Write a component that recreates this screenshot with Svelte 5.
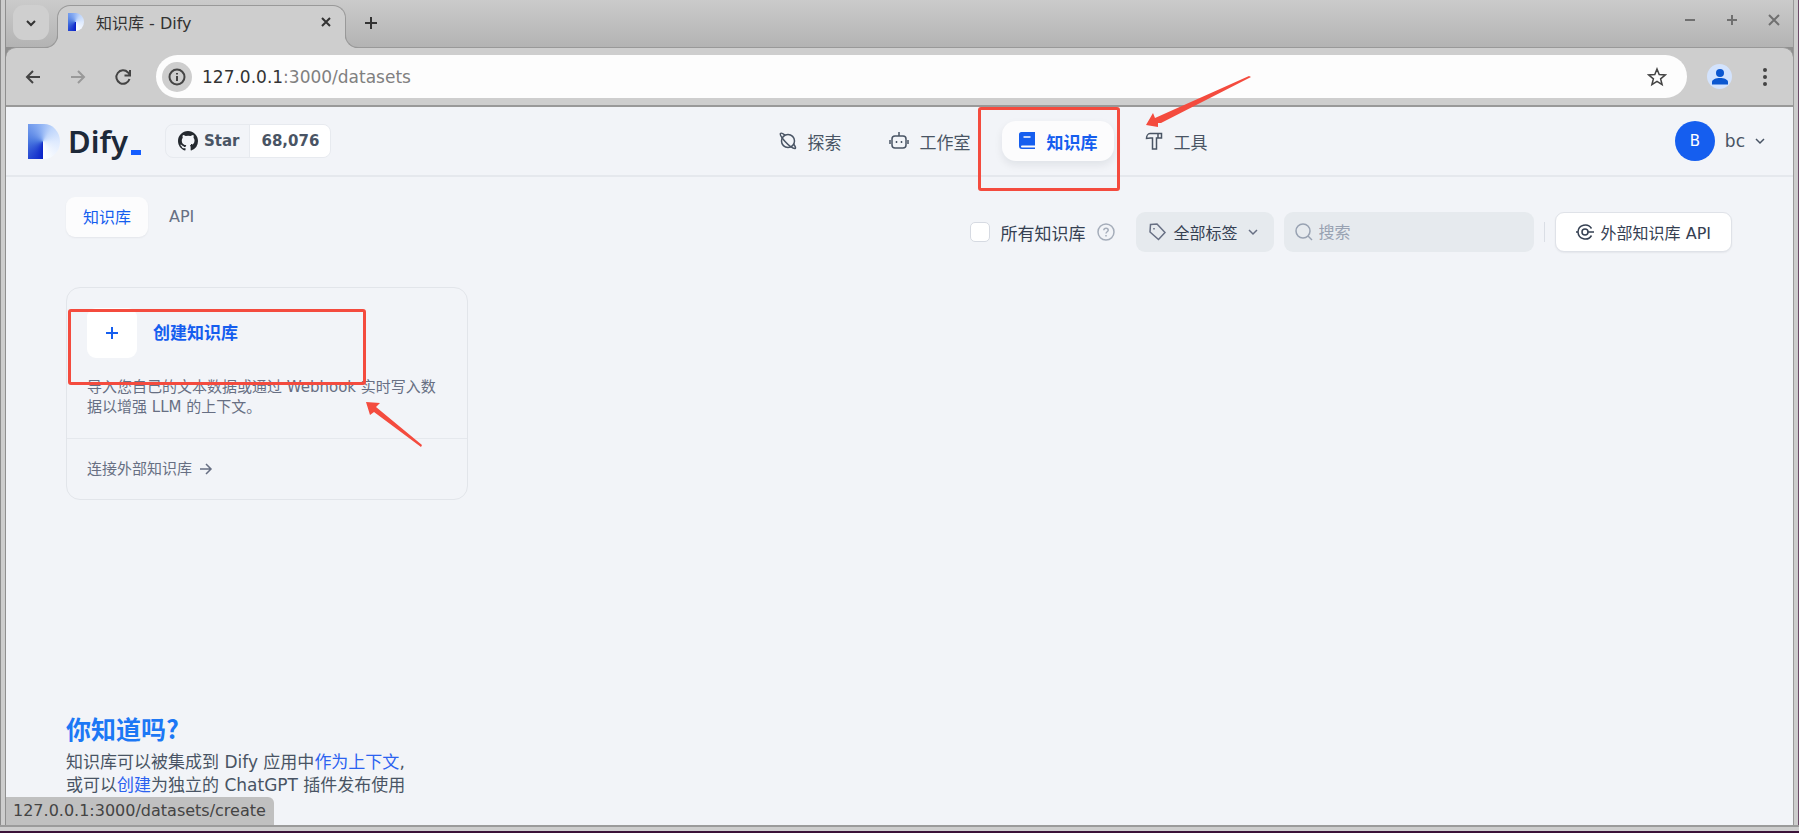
<script>
    let onlyAll = $state(false)
    let keyword = $state('')
    let address = '127.0.0.1:3000/datasets'

    const tabs = [
        { name: '知识库', active: true },
        { name: 'API', active: false },
    ]
</script>

<div class="window">
    <div class="tabstrip">
        <button class="tab-search" aria-label="Search tabs">
            <svg width="12" height="12" viewBox="0 0 12 12"><path d="M2 4l4 4 4-4" /></svg>
        </button>
        <div class="browser-tab">
            <span class="mark"></span>
            <span class="tab-title">知识库 - Dify</span>
            <button aria-label="Close tab">
                <svg width="12" height="12" viewBox="0 0 12 12"><path d="M2 2l8 8M10 2l-8 8" /></svg>
            </button>
        </div>
        <button class="new-tab" aria-label="New tab">
            <svg width="14" height="14" viewBox="0 0 14 14"><path d="M7 1v12M1 7h12" /></svg>
        </button>
        <div class="window-buttons">
            <button aria-label="Minimize">
                <svg width="12" height="12" viewBox="0 0 12 12"><path d="M1 6h10" /></svg>
            </button>
            <button aria-label="Maximize">
                <svg width="12" height="12" viewBox="0 0 12 12"><path d="M1 6h10M6 1v10" /></svg>
            </button>
            <button aria-label="Close window">
                <svg width="12" height="12" viewBox="0 0 12 12"><path d="M1 1l10 10M11 1L1 11" /></svg>
            </button>
        </div>
    </div>

    <div class="toolbar">
        <button aria-label="Back">
            <svg width="18" height="18" viewBox="0 0 18 18"><path d="M16 9H3M9 3L3 9l6 6" /></svg>
        </button>
        <button class="disabled" aria-label="Forward">
            <svg width="18" height="18" viewBox="0 0 18 18"><path d="M2 9h13M9 3l6 6-6 6" /></svg>
        </button>
        <button aria-label="Reload">
            <svg width="18" height="18" viewBox="0 0 18 18"><path d="M15.500 11A6.700 6.700 0 1 1 14 4.500l2 2.500M16 2v5.500h-5.500" /></svg>
        </button>
        <div class="address">
            <button class="info" aria-label="Site information">
                <svg width="18" height="18" viewBox="0 0 18 18">
                    <circle cx="9" cy="9" r="7.500" /><path d="M9 8v5M9 5v1.500" />
                </svg>
            </button>
            <a class="url" href="#top">{address.split(':')[0]}<span>:{address.split(':')[1]}</span></a>
            <button aria-label="Bookmark">
                <svg class="thin" width="20" height="20" viewBox="0 0 20 20">
                    <path d="M10 2l2.200 5.600 6 .4-4.600 3.800 1.500 5.900L10 14.400l-5.100 3.300 1.500-5.900L1.800 8l6-.4z" />
                </svg>
            </button>
        </div>
        <button class="profile" aria-label="Profile">
            <svg width="16" height="16" viewBox="0 0 16 16">
                <circle cx="8" cy="4" r="4" /><path d="M0 15.500V13c0-2.500 4-4 8-4s8 1.500 8 4v2.500z" />
            </svg>
        </button>
        <button class="more" aria-label="Menu">
            <svg width="18" height="20" viewBox="0 0 18 20">
                <circle cx="9" cy="3" r="2" /><circle cx="9" cy="10" r="2" /><circle cx="9" cy="17" r="2" />
            </svg>
        </button>
    </div>

    <div class="page">
        <header>
            <div class="brand">
                <a class="logo" href="#top">
                    <span class="mark"></span>
                    <span class="word">Dify</span><i></i>
                </a>
                <a class="github" href="#star">
                    <span class="star">
                        <svg width="20" height="20" viewBox="0 0 16 16">
                            <path d="M8 0C3.580 0 0 3.580 0 8c0 3.540 2.290 6.530 5.470 7.590.4.070.55-.17.55-.38v-1.500c-2 .4-2.700-.5-2.900-1-.1-.2-.5-1-.9-1.200-.3-.2-.8-.6 0-.6.700 0 1.200.6 1.400.9.800 1.300 2 .9 2.500.7.1-.5.300-.9.600-1.100-1.900-.2-3.700-.9-3.700-4 0-.9.300-1.600.8-2.100-.1-.2-.4-1 .1-2.100 0 0 .7-.2 2.200.8a7.600 7.600 0 0 1 4 0c1.500-1 2.200-.8 2.200-.8.400 1.100.200 1.900.1 2.100.5.500.8 1.200.8 2.100 0 3.100-1.900 3.800-3.700 4 .3.300.600.8.600 1.500v2.200c0 .2.100.5.500.4A8 8 0 0 0 16 8c0-4.420-3.580-8-8-8z" />
                        </svg>
                        Star
                    </span>
                    <span class="count">68,076</span>
                </a>
            </div>

            <nav>
                <a href="#explore">
                    <svg width="18" height="18" viewBox="0 0 18 18">
                        <circle cx="9" cy="9" r="6.500" />
                        <path d="M6 3.200C3.500 1.200 2 .9 1.500 1.500 0 3.500 11 16.800 16 16.500c1-.3.4-2-1.500-4.500" />
                    </svg>
                    探索
                </a>
                <a href="#studio">
                    <svg width="20" height="18" viewBox="0 0 20 18">
                        <rect x="3" y="4" width="14" height="12" rx="3" />
                        <path d="M10 4V0M1 8v4M19 8v4M7.500 9v2M12.500 9v2" />
                    </svg>
                    工作室
                </a>
                <a class="active" href="#datasets">
                    <svg width="18" height="18" viewBox="0 0 18 18">
                        <path class="solid" d="M3.500 0H17v13.500H4a1 1 0 0 0 0 2h13V17H4a3 3 0 0 1-3-3V2.500A2.500 2.500 0 0 1 3.500 0z" />
                        <path class="slot" d="M5.500 5h7" />
                    </svg>
                    知识库
                    <span class="frame"></span>
                    <svg class="arrow" width="108" height="52" viewBox="0 0 108 52">
                        <path d="M2 49L9 37l2 5L105 0l2 1L17 47l-3 0 0 4z" />
                    </svg>
                </a>
                <a href="#tools">
                    <svg width="18" height="18" viewBox="0 0 18 18">
                        <path d="M5 1.500h11.500V6h-5v11h-4V6H5.500l-4 .5C1.500 4 3 1.500 5 1.500zM13 1.500V6" />
                    </svg>
                    工具
                </a>
            </nav>

            <button class="account">
                <span class="avatar">B</span>
                bc
                <svg width="10" height="10" viewBox="0 0 10 10"><path d="M1 3l4 4 4-4" /></svg>
            </button>
        </header>

        <main>
            <div class="controls">
                <div class="tabs">
                    {#each tabs as tab}
                        <button class:selected={tab.active}>{tab.name}</button>
                    {/each}
                </div>
                <div class="filters">
                    <label class="all">
                        <input type="checkbox" bind:checked={onlyAll}>
                        所有知识库
                        <svg width="18" height="18" viewBox="0 0 18 18">
                            <circle cx="9" cy="9" r="8" />
                            <path d="M6.800 7.200C7 4.500 11.200 4.600 11.200 7.200c0 1.500-2.200 1.600-2.200 3.300M9 12v1.400" />
                        </svg>
                    </label>
                    <button class="tags">
                        <svg width="18" height="18" viewBox="0 0 18 18">
                            <path d="M2.500 1.500L9 1l8 8.500-6.500 7L2 9zM6 5v1.500" />
                        </svg>
                        全部标签
                        <svg class="chevron" width="10" height="10" viewBox="0 0 10 10"><path d="M1 3l4 4 4-4" /></svg>
                    </button>
                    <label class="search">
                        <svg width="18" height="18" viewBox="0 0 18 18"><circle cx="8" cy="8" r="7" /><path d="M13 13l4 4" /></svg>
                        <input type="text" placeholder="搜索" aria-label="搜索" bind:value={keyword}>
                    </label>
                    <span class="divider"></span>
                    <button class="external">
                        <svg width="18" height="18" viewBox="0 0 18 18">
                            <circle cx="9" cy="9" r="3" />
                            <path d="M12 9h6M0 9h2.500M15.500 5.500A7.300 7.300 0 0 0 2 9a7.300 7.300 0 0 0 13.500 3.500" />
                        </svg>
                        外部知识库 API
                    </button>
                </div>
            </div>

            <div class="grid">
                <section class="card">
                    <a class="create" href="#create">
                        <span class="head">
                            <span class="plus">
                                <svg width="14" height="14" viewBox="0 0 14 14"><path d="M7 1v12M1 7h12" /></svg>
                            </span>
                            <strong>创建知识库</strong>
                        </span>
                        <span class="desc">导入您自己的文本数据或通过 Webhook 实时写入数据以增强 LLM 的上下文。</span>
                    </a>
                    <a class="connect" href="#connect">
                        连接外部知识库
                        <svg class="thin" width="14" height="14" viewBox="0 0 14 14"><path d="M1 7h11M7 2l5 5-5 5" /></svg>
                    </a>
                    <span class="frame"></span>
                    <svg class="arrow" width="60" height="48" viewBox="0 0 60 48">
                        <path d="M2 2l14 1-4 4 46 38-1 2L10 12l-4 3z" />
                    </svg>
                </section>
            </div>

            <footer>
                <h3>你知道吗?</h3>
                <p>
                    知识库可以被集成到 Dify 应用中<a href="#context">作为上下文</a>,<br>
                    或可以<a href="#plugin">创建</a>为独立的 ChatGPT 插件发布使用
                </p>
            </footer>
        </main>
    </div>
    <div class="status">127.0.0.1:3000/datasets/create</div>
</div>

<style>
    :global(body) {
        margin: 0;
    }

    .window {
        position: relative;
        display: flex;
        flex-direction: column;
        box-sizing: border-box;
        min-height: 100vh;
        padding: 0 6px 8px;
        background: linear-gradient(to right, #8c8c8c 1px, #cdcdcd 1px, #cdcdcd 5px, #8f8f8f 5px, #8f8f8f calc(100% - 6px), #999 calc(100% - 6px), #999 calc(100% - 5px), #cdcdcd calc(100% - 5px), #cdcdcd calc(100% - 1px), #6c4a68 calc(100% - 1px));
        font-family: "DejaVu Sans", "Noto Sans CJK SC", sans-serif;
        font-size: 17px;
        color: #495464;
    }

    .window::after {
        content: "";
        position: absolute;
        left: 0;
        right: 0;
        bottom: 0;
        height: 4px;
        border-top: 2px solid #9b9b9b;
        border-bottom: 2px solid #3a1238;
        background: #cdcdcd;
    }

    button {
        display: flex;
        align-items: center;
        justify-content: center;
        margin: 0;
        padding: 0;
        border: none;
        background: none;
        font: inherit;
        color: inherit;
    }

    a {
        color: inherit;
        text-decoration: none;
    }

    svg {
        flex: none;
        fill: none;
        stroke: currentColor;
        stroke-width: 2;
    }

    .thin {
        stroke-width: 1.5;
    }

    .mark {
        flex: none;
        width: 32px;
        height: 35px;
        border-radius: 0 50% 50% 0;
        background: conic-gradient(from 180deg at 47% 50%, #0a22c8, #4a78e0 25%, #86abf2 45%, #c0d6fb 60%, #deeafe 75%, #fff);
    }

    /* browser chrome */
    .tabstrip {
        display: flex;
        align-items: flex-end;
        height: 47px;
        background: linear-gradient(#cbcbcb, #b3b3b3);
        color: #333;
    }

    .tab-search {
        width: 36px;
        height: 35px;
        margin: 0 8px 7px 7px;
        border-radius: 11px;
        background: #cfcfcf;
    }

    .browser-tab {
        position: relative;
        z-index: 1;
        display: flex;
        align-items: center;
        gap: 12px;
        box-sizing: border-box;
        width: 289px;
        height: 43px;
        margin-bottom: -1px;
        padding: 0 13px 10px 10px;
        border: 1px solid #999;
        border-bottom: none;
        border-radius: 13px 13px 0 0;
        background: #cecece;
        font-size: 16px;
    }

    .browser-tab::before,
    .browser-tab::after {
        content: "";
        position: absolute;
        bottom: 0;
        width: 13px;
        height: 13px;
        border-bottom: 1px solid #999;
    }

    .browser-tab::before {
        right: 100%;
        border-right: 1px solid #999;
        border-bottom-right-radius: 13px;
        box-shadow: 4px 4px 0 #cecece;
        clip-path: inset(0 -1px 0 0);
    }

    .browser-tab::after {
        left: 100%;
        border-left: 1px solid #999;
        border-bottom-left-radius: 13px;
        box-shadow: -4px 4px 0 #cecece;
        clip-path: inset(0 0 0 -1px);
    }

    .browser-tab .mark {
        width: 16px;
        height: 18px;
    }

    .tab-title {
        flex: 1;
    }

    .new-tab {
        width: 36px;
        height: 35px;
        margin: 0 0 7px 7px;
    }

    .window-buttons {
        display: flex;
        gap: 30px;
        margin: 0 13px 21px auto;
        color: #707070;
    }

    .toolbar {
        display: flex;
        align-items: center;
        box-sizing: border-box;
        height: 60px;
        padding: 0 13px 0 18px;
        border: solid #999;
        border-width: 1px 0 2px;
        border-radius: 10px 10px 0 0;
        background: #cecece;
        color: #444;
    }

    .toolbar > button {
        width: 18px;
        margin-right: 27px;
    }

    .toolbar > .disabled {
        color: #999;
    }

    .toolbar > button:nth-child(3) {
        margin-right: 24px;
    }

    .address {
        display: flex;
        flex: 1;
        align-items: center;
        gap: 10px;
        height: 43px;
        padding: 0 20px 0 6px;
        border-radius: 22px;
        background: #fdfdfd;
    }

    .info {
        width: 30px;
        height: 30px;
        border-radius: 50%;
        background: #cecece;
    }

    .url {
        flex: 1;
        color: #333;
    }

    .url span {
        color: #808080;
    }

    .toolbar > .profile {
        width: 25px;
        height: 25px;
        margin: 0 24px 0 20px;
        border-radius: 50%;
        background: #d3e3fd;
        color: #0b57d0;
    }

    .profile svg,
    .more svg {
        fill: currentColor;
        stroke: none;
    }

    .toolbar > .more {
        margin-right: 6px;
    }

    /* Dify page */
    .page {
        display: flex;
        flex: 1;
        flex-direction: column;
        background: #f2f4f8;
    }

    header {
        display: flex;
        align-items: center;
        justify-content: space-between;
        height: 68px;
        padding: 0 8px 0 22px;
        border-bottom: 2px solid #e5e8ed;
    }

    .brand,
    .logo {
        display: flex;
        align-items: center;
    }

    .brand {
        gap: 24px;
    }

    .logo .mark {
        margin-right: 8px;
    }

    .word {
        font: 600 31px/36px "Noto Sans", sans-serif;
        color: #1d2939;
    }

    .logo i {
        align-self: flex-end;
        width: 10px;
        height: 5px;
        margin: 0 0 4px 3px;
        background: #155eff;
    }

    .github {
        display: flex;
        border: 1px solid #e7eaef;
        border-radius: 8px;
        overflow: hidden;
        font-size: 15px;
        font-weight: bold;
        line-height: 32px;
    }

    .github svg {
        fill: #24292f;
        stroke: none;
    }

    .star {
        display: flex;
        align-items: center;
        gap: 6px;
        padding: 0 10px 0 12px;
    }

    .count {
        padding: 0 11px;
        border-left: 1px solid #e7eaef;
        background: #fff;
    }

    nav {
        display: flex;
        gap: 15px;
    }

    nav a {
        position: relative;
        display: flex;
        align-items: center;
        gap: 11px;
        height: 40px;
        padding: 0 16px;
        border-radius: 14px;
    }

    nav svg {
        stroke-width: 1.5;
    }

    nav .active {
        background: #fcfcfd;
        box-shadow: 0 4px 8px rgba(16, 24, 40, 0.08);
        font-weight: bold;
        color: #155eef;
    }

    .solid {
        fill: currentColor;
        stroke: none;
    }

    .slot {
        stroke: #fff;
    }

    /* red callouts */
    .frame {
        position: absolute;
        z-index: 2;
        box-sizing: border-box;
        border: 3px solid #f44b3e;
        border-radius: 3px;
    }

    .arrow {
        position: absolute;
        z-index: 2;
        fill: #f44b3e;
        stroke: none;
    }

    nav .frame {
        left: -24px;
        top: -14px;
        width: 142px;
        height: 84px;
    }

    nav .arrow {
        left: 142px;
        top: -45px;
    }

    .card .frame {
        left: 1px;
        top: 21px;
        width: 298px;
        height: 76px;
    }

    .card .arrow {
        left: 297px;
        top: 112px;
    }

    .account {
        gap: 10px;
        padding: 0 20px;
    }

    .account svg,
    .chevron {
        stroke-width: 1.5;
    }

    .avatar {
        width: 40px;
        border-radius: 50%;
        background: #155eef;
        font-size: 15px;
        line-height: 40px;
        color: #fff;
    }

    main {
        display: flex;
        flex: 1;
        flex-direction: column;
        padding: 20px 61px 28px 60px;
    }

    .controls {
        display: flex;
        justify-content: space-between;
        font-size: 16px;
    }

    .tabs {
        display: flex;
        gap: 4px;
        padding-bottom: 15px;
    }

    .tabs button {
        height: 40px;
        padding: 0 17px 2px;
        border-radius: 9px;
        color: #676f83;
    }

    .tabs .selected {
        background: #fcfcfd;
        box-shadow: 0 1px 2px rgba(16, 24, 40, 0.06);
        color: #155eef;
    }

    .filters {
        display: flex;
        align-items: center;
        padding-top: 15px;
    }

    .all {
        display: flex;
        align-items: center;
        gap: 11px;
        margin-right: 21px;
        font-size: 17px;
        color: #354052;
    }

    .all input {
        appearance: none;
        width: 20px;
        height: 20px;
        margin: 0;
        border: 1px solid #d6dae2;
        border-radius: 5px;
        background: #fff;
    }

    .all svg {
        stroke: #a5adba;
        stroke-width: 1.5;
    }

    .tags {
        gap: 8px;
        height: 40px;
        margin-right: 10px;
        padding: 0 16px 0 12px;
        border-radius: 9px;
        background: #e6eaee;
        color: #354052;
    }

    .tags svg {
        stroke: #676f83;
        stroke-width: 1.5;
    }

    .tags .chevron {
        margin-left: 2px;
    }

    .search {
        display: flex;
        align-items: center;
        gap: 6px;
        box-sizing: border-box;
        width: 250px;
        height: 40px;
        padding: 0 11px;
        border-radius: 9px;
        background: #e6eaee;
        color: #98a2b2;
    }

    .search svg,
    .external svg {
        stroke-width: 1.5;
    }

    .search input {
        flex: 1;
        min-width: 0;
        padding: 0;
        border: none;
        outline: none;
        background: none;
        font: inherit;
        color: #354052;
    }

    .search input::placeholder {
        color: #98a2b2;
    }

    .divider {
        width: 1px;
        height: 20px;
        margin: 0 10px;
        background: #dadee5;
    }

    .external {
        gap: 7px;
        height: 40px;
        padding: 0 20px;
        border: 1px solid #dfe2e8;
        border-radius: 9px;
        background: #fff;
        box-shadow: 0 1px 2px rgba(16, 24, 40, 0.06);
        color: #354052;
    }

    .grid {
        display: grid;
        grid-template-columns: repeat(4, 1fr);
        gap: 20px;
        padding-top: 35px;
    }

    .card {
        position: relative;
        border: 1px solid #e2e5ea;
        border-radius: 14px;
        font-size: 15px;
        line-height: 20px;
        color: #676f83;
    }

    .create {
        display: block;
        height: 130px;
        padding: 20px 20px 0;
    }

    .head {
        display: flex;
        align-items: center;
        gap: 16px;
        margin-bottom: 19px;
    }

    .head strong {
        font-size: 17px;
        color: #155eef;
    }

    .plus {
        display: flex;
        align-items: center;
        justify-content: center;
        width: 50px;
        height: 50px;
        border-radius: 9px;
        background: #fff;
        color: #155eef;
    }

    .desc {
        display: block;
    }

    .connect {
        display: flex;
        align-items: center;
        gap: 7px;
        height: 60px;
        padding: 0 20px;
        border-top: 1px solid #e5e8ed;
    }

    footer {
        margin-top: auto;
    }

    h3 {
        margin: 0 0 5px;
        font-size: 25px;
        line-height: 36px;
        font-family: "Noto Sans CJK SC", sans-serif;
        color: #1c78f5;
    }

    p {
        margin: 0;
        line-height: 23px;
    }

    p a {
        color: #2b62f0;
    }

    .status {
        position: absolute;
        left: 6px;
        bottom: 8px;
        padding: 0 8px 0 7px;
        border-top-right-radius: 6px;
        background: #c0c0c0;
        font-size: 16px;
        line-height: 28px;
        color: #444;
    }
</style>
